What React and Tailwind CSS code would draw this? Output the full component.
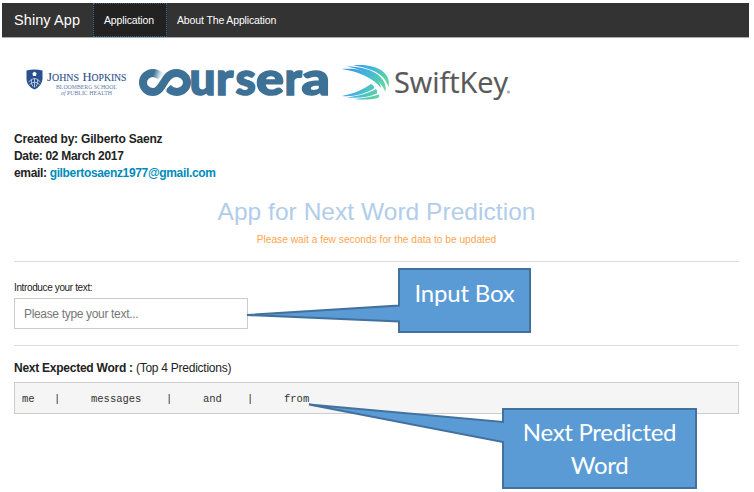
function HopkinsLogo() {
  return (
    <svg className="block h-[40px] w-[112px] shrink-0" viewBox="22 62 112 40" role="img" aria-label="Johns Hopkins Bloomberg School of Public Health">
      <path d="M26.500 70.500Q34 68.500 42.500 70.500V79Q42 86 34.500 89.500Q26.500 86 26.500 79Z" fill="#28508f" />
      <path d="M32.500 73.500q2-3.500 4 0l-.5 2.500h-3Z" fill="#fff" />
      <path d="M28.500 82q6-7 12 0M29.500 84.500q5-4.500 10 0M34.500 78.500v9M31.500 79.500q-1 4 1.500 7M37.500 79.500q1 4-1.500 7" fill="none" stroke="#c6d1e5" strokeWidth=".9" />
      <g fill="#2d4f8c" fontFamily="Liberation Serif, serif">
        <text y="80.500" fontSize="13" stroke="#2d4f8c" strokeWidth=".1"><tspan x="47" textLength="32" lengthAdjust="spacingAndGlyphs">J<tspan fontSize="10">OHNS</tspan></tspan></text>
        <text y="80.500" fontSize="13" stroke="#2d4f8c" strokeWidth=".1"><tspan x="82.500" textLength="44" lengthAdjust="spacingAndGlyphs">H<tspan fontSize="10">OPKINS</tspan></tspan></text>
        <g fillOpacity=".8">
          <text x="56" y="88.500" fontSize="6" textLength="61" lengthAdjust="spacingAndGlyphs">BLOOMBERG SCHOOL</text>
          <text x="61" y="94.500" fontSize="6" textLength="51" lengthAdjust="spacingAndGlyphs"><tspan fontStyle="italic">of</tspan> PUBLIC HEALTH</text>
        </g>
      </g>
    </svg>
  );
}

function CourseraLogo() {
  return (
    <svg className="block h-[40px] w-[200px] shrink-0 overflow-visible" viewBox="134 62 200 40" role="img" aria-label="coursera">
      <defs>
        <linearGradient id="tip" x1="154" y1="72" x2="161" y2="74" gradientUnits="userSpaceOnUse">
          <stop offset="0" stopColor="#3d7195" />
          <stop offset="1" stopColor="#3d7195" stopOpacity=".15" />
        </linearGradient>
      </defs>
      <g fill="none" strokeWidth="8">
        <path d="M153 73C147.500 73 143 77.200 143 82.500S147.500 92 153 92C164 92 163 73 176.500 73C182 73 187 77.200 187 82.500S182 92 176.500 92Q171.500 92 167.800 87.500" stroke="#3d7195" />
        <path d="M152.500 73Q157 73 161 76.500" stroke="url(#tip)" />
        <path d="M166.500 95Q164.500 91 167.500 86" stroke="#fff" strokeWidth="1.300" />
      </g>
      <g fill="#3d7195" stroke="#3d7195" strokeWidth="1.500" fontFamily="Lato, sans-serif" fontWeight="900" fontSize="46">
        <text y="95" x="189.500 216 235.500">urs</text>
        <text y="95" x="256" textLength="28" lengthAdjust="spacingAndGlyphs">e</text>
        <text y="95" x="284.500">r</text>
        <text y="95" x="301.500" textLength="28.500" lengthAdjust="spacingAndGlyphs">a</text>
      </g>
    </svg>
  );
}

function SwiftKeyLogo() {
  return (
    <svg className="block h-[40px] w-[180px] shrink-0 overflow-visible" viewBox="338 62 180 40" role="img" aria-label="SwiftKey">
      <defs>
        <linearGradient id="wing" x1="342" y1="68" x2="384" y2="94" gradientUnits="userSpaceOnUse">
          <stop offset="0" stopColor="#328eea" />
          <stop offset=".5" stopColor="#43b5dc" />
          <stop offset="1" stopColor="#65db94" />
        </linearGradient>
      </defs>
      <g fill="url(#wing)">
        <path d="M353 65.500C376 63 392 73 388.500 87C385 75 374 68.500 353 65.500Z" />
        <path d="M347 66.500C370 66.500 388 76 385.500 92C380 79 368 71 347 66.500Z" />
        <path d="M342 69C364 67.500 380 76 381 88C373 78 360 72 342 69Z" />
        <path d="M342 96C353 94 364 89 371 84Q375 86 374 88.500C365 94 353 97 342 96Z" />
        <path d="M347 97.500C359 96 369 93 376 89Q378 91 377 93.500C368 97.500 358 98.500 347 97.500Z" />
        <path d="M354 99C364 98 372 97 379 94.500Q380 96 378 98C370 100 362 99.800 354 99Z" />
      </g>
      <text x="394" y="93" fill="#595959" stroke="#595959" strokeWidth=".2" fontFamily="Open Sans, sans-serif" fontWeight="400" fontSize="30" textLength="114" lengthAdjust="spacingAndGlyphs">SwiftKey</text>
      <circle cx="508.500" cy="92" r="1.500" fill="#aaa" />
    </svg>
  );
}

export default function App() {
  return (
    <div className="relative h-[492px] w-[754px] overflow-hidden bg-white pt-[3px] text-[#222] [font-family:'Liberation_Sans',Arial,sans-serif]">
      <nav className="ml-[2px] flex h-[35px] w-[747px] border-b border-[#aaa] bg-[#333] text-white">
        <div className="w-[91px] pl-3 text-[14.500px] leading-[34px] tracking-[0.080px]">Shiny App</div>
        <div className="w-[74px] border border-dotted border-[#35669a] bg-[#222] pl-[10px] text-[10.500px] leading-[32px] tracking-[-0.130px]">Application</div>
        <div className="pl-[10px] text-[10.500px] leading-[34px] tracking-[-0.130px]">About The Application</div>
      </nav>
      <main className="flex w-[754px] flex-col pr-[15px] pl-[14px]">
        <div className="mt-[24px] ml-[8px] flex h-[40px]">
          <HopkinsLogo />
          <CourseraLogo />
          <div className="pl-1"><SwiftKeyLogo /></div>
        </div>
        <div className="mt-[29px] text-[12px] leading-[17px] font-bold">
          <p className="tracking-[-0.190px]">Created by: Gilberto Saenz</p>
          <p className="tracking-[-0.310px]">Date: 02 March 2017</p>
          <p className="tracking-[-0.340px]">email: <a className="text-[#008cba]">gilbertosaenz1977@gmail.com</a></p>
        </div>
        <h1 className="mt-[13px] text-center text-[24.500px] leading-[34px] tracking-[0.040px] text-[#b1cde9]">App for Next Word Prediction</h1>
        <p className="mt-[4px] text-center text-[10.200px] leading-[14px] text-[#ffa54f]">Please wait a few seconds for the data to be updated</p>
        <hr className="mt-[14px] border-[#ddd]" />
        <label className="mt-[19px] text-[10px] leading-[14px] tracking-[-0.370px]">Introduce your text:</label>
        <div className="mt-[3px] h-[31px] w-[234px] border border-[#ccc] pl-[9px] text-[12px] leading-[30px] tracking-[-0.330px] text-[#777]">Please type your text...</div>
        <hr className="mt-[16px] border-[#ddd]" />
        <div className="mt-[14px] text-[12px] leading-[16px] tracking-[-0.250px]"><b>Next Expected Word :</b> (Top 4 Predictions)</div>
        <div className="mt-[6px] flex h-[32px] border border-[#ccc] bg-[#f5f5f5] pl-[7px] text-[10.500px] leading-[32px] text-[#333] [font-family:'Liberation_Mono',monospace]">
          <span className="w-[32px]">me</span><span className="w-[37px]">|</span>
          <span className="w-[75px]">messages</span><span className="w-[37px]">|</span>
          <span className="w-[44px]">and</span><span className="w-[37px]">|</span>
          <span>from</span>
        </div>
      </main>
      <svg className="pointer-events-none absolute inset-0 h-[492px] w-[754px]" viewBox="0 0 754 492" fill="#5b9bd5" stroke="#41719c" strokeWidth="2">
        <path d="M399 269H530V332H399V321.500L247 315L399 305.500Z" />
        <path d="M503 409H696V488H503V442L309 404.500L503 422Z" />
      </svg>
      <div className="absolute top-[277px] left-[399px] w-[131px] text-center text-[24px] leading-[32px] tracking-[-0.200px] text-white [font-family:Lato,sans-serif]">Input Box</div>
      <div className="absolute top-[415px] left-[503px] w-[193px] text-center text-[24px] leading-[33px] tracking-[-0.300px] text-white [font-family:Lato,sans-serif]">Next Predicted<br />Word</div>
    </div>
  );
}
